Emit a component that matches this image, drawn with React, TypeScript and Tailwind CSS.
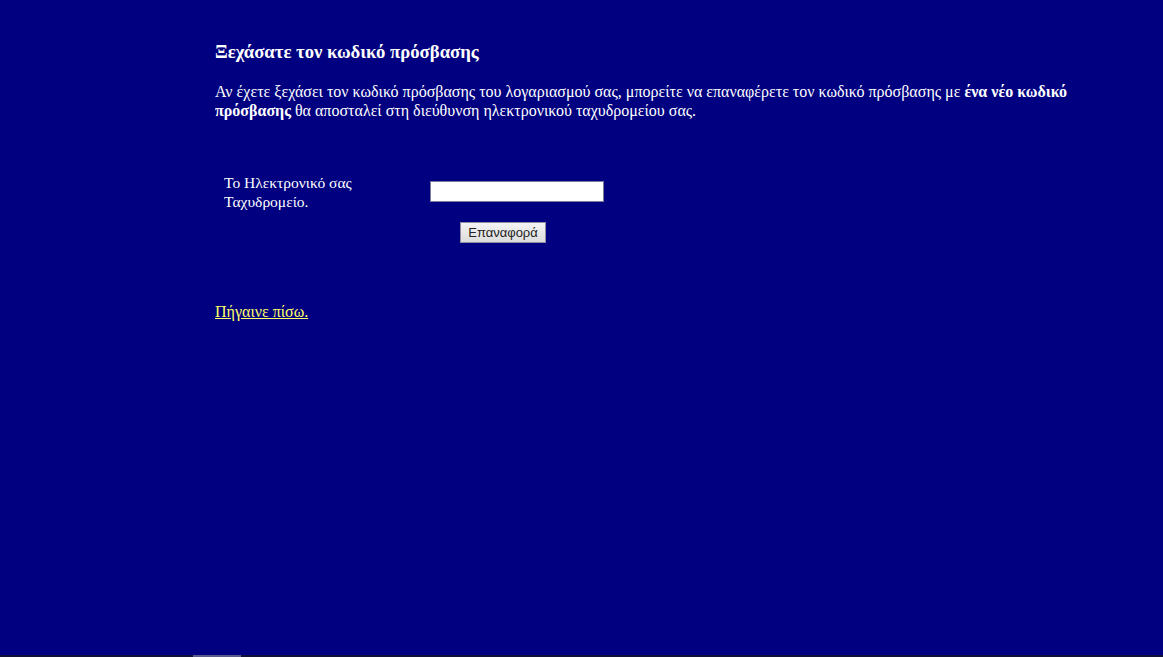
import React from "react";

function ForgotPassword(): JSX.Element {
    return (
        <div className="h-[657px] w-full bg-[#000080] flex flex-col overflow-hidden" style={{ fontFamily: '"Liberation Serif", "DejaVu Serif", serif' }}>
            <div className="flex-1 pl-[215px] text-white">
                <h3 className="mt-[41px] text-[18.72px] font-bold leading-[22px]">Ξεχάσατε τον κωδικό πρόσβασης</h3>

                <p className="mt-[19px] w-[860px] text-base leading-[19px]">
                    Αν έχετε ξεχάσει τον κωδικό πρόσβασης του λογαριασμού σας, μπορείτε να επαναφέρετε τον κωδικό πρόσβασης με <b>ένα νέο κωδικό πρόσβασης</b> θα αποσταλεί στη διεύθυνση ηλεκτρονικού ταχυδρομείου σας.
                </p>

                <div className="mt-[53px] flex">
                    <div className="ml-[9px] w-[206px] text-[15.5px] leading-[19px]">
                        <div className="w-[150px]">Το Ηλεκτρονικό σας Ταχυδρομείο.</div>
                    </div>
                    <div className="mt-[8px] flex flex-col">
                        <input type="text" className="h-[21px] w-[174px] bg-white border border-[#7a7a9a] outline-none" />
                        <button
                            className="mt-[20px] ml-[30px] h-[21px] w-[86px] border border-[#8f8f9f] bg-gradient-to-b from-[#f4f4f4] to-[#dcdcdc] text-[13px] text-[#222] leading-none"
                            style={{ fontFamily: '"Liberation Sans", Arial, sans-serif' }}
                        >
                            Επαναφορά
                        </button>
                    </div>
                </div>

                <a href="#" className="mt-[60px] inline-block text-base text-[#ffff66] underline leading-[18px]">Πήγαινε πίσω.</a>
            </div>

            <div className="h-[2px] w-full bg-[#10103a] flex">
                <div className="ml-[193px] w-[48px] h-full bg-[#5a5a8c]"></div>
            </div>
        </div>
    );
}

export default function App(): JSX.Element {
    return <ForgotPassword />;
}
